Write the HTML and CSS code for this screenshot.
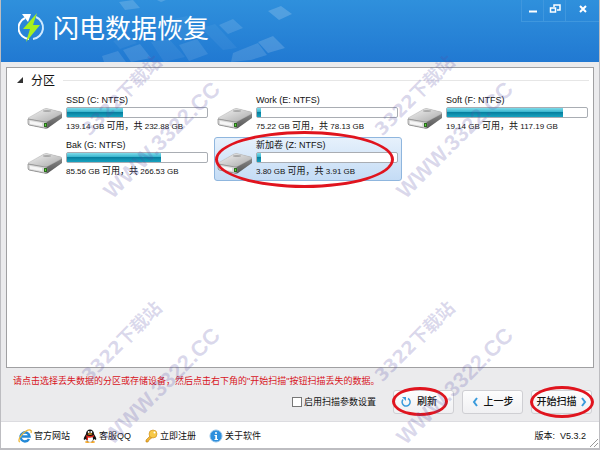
FILE: index.html
```html
<!DOCTYPE html>
<html lang="zh-CN">
  <head>
    <meta charset="UTF-8" />
    <title>闪电数据恢复</title>
    <link rel="stylesheet" href="styles.css">
  </head>
  <body>
    <div class="window">
      <header class="titlebar">
        <svg class="tiles" width="300" height="62" viewBox="0 0 300 62" aria-hidden="true">
          <g fill="#fff">
            <path d="M118 2 L132 0 L139 8 L124 10 Z" opacity=".16" />
            <path d="M156 0 L165 0 L160 2 Z" opacity=".16" />
            <path d="M267 11 L280 6 L291 14 L278 20 Z" opacity=".18" />
            <path d="M218 25 L232 19 L242 28 L227 34 Z" opacity=".13" />
            <path d="M200 28 L214 24 L236 48 L222 50 Z" opacity=".05" />
            <path d="M101 56 L117 51 L125 62 L103 62 Z" opacity=".12" />
            <path d="M122 50 L139 44 L150 58 L130 62 Z" opacity=".12" />
            <path d="M112 41 L128 36 L136 43 L119 49 Z" opacity=".05" />
            <path d="M150 42 L168 39 L184 57 L163 62 Z" opacity=".06" />
            <path d="M178 45 L196 39 L207 54 L188 61 Z" opacity=".1" />
            <path d="M168 20 L186 16 L200 35 L178 40 Z" opacity=".05" />
            <path d="M230 62 L232 53 L257 43 L266 55 L250 60 Z" opacity=".13" />
            <path d="M257 42 L272 36 L284 48 L267 53 Z" opacity=".16" />
          </g>
        </svg>
        <svg class="logo" width="28" height="32" viewBox="0 0 28 32" aria-hidden="true">
          <g fill="none" stroke="#fff" stroke-width="2">
            <path d="M11 27 A11 11 0 0 1 7 6" />
            <path d="M18 5 A11.500 11.500 0 0 1 15 27" stroke="#cfe9ff" />
          </g>
          <path d="M4 2 L13 2 L10 10 Z" fill="#fff" />
          <path d="M19 1 L5 17 L12 17 L8 30 L22 13 L15 13 Z" fill="#a6f01e" />
        </svg>
        <h1 class="brand">闪电数据恢复</h1>
        <div class="controls">
          <button class="control" aria-label="最小化">
            <svg width="10" height="10" viewBox="0 0 10 10"><path d="M1 7.500 H9" stroke="#fff" stroke-width="2" /></svg>
          </button>
          <button class="control" aria-label="还原">
            <svg width="12" height="10" viewBox="0 0 12 10" fill="none" stroke="#fff" stroke-width="1.500"><path d="M5 3 V1 H11 V6 H8" /><rect x="1.500" y="4" width="5" height="4" /></svg>
          </button>
          <button class="control control-close" aria-label="关闭">
            <svg width="10" height="10" viewBox="0 0 10 10"><path d="M2 2 L8 8 M8 2 L2 8" stroke="#fff" stroke-width="2" /></svg>
          </button>
        </div>
      </header>

      <svg class="defs" width="0" height="0" aria-hidden="true">
        <defs>
          <linearGradient id="disk-top" x1="0" y1="0" x2="1" y2="1">
            <stop offset="0" stop-color="#f4f4f4" />
            <stop offset="1" stop-color="#a9a9a9" />
          </linearGradient>
          <linearGradient id="disk-side" x1="0" y1="0" x2="0" y2="1">
            <stop offset="0" stop-color="#999" />
            <stop offset="1" stop-color="#555" />
          </linearGradient>
          <symbol id="disk" viewBox="0 0 36 22">
            <path d="M1 11 L17 1 Q19 0 22 1 L34 4 Q35 5 35 6 L35 10 L21 20 Q19 21 17 20 L2 17 Q1 16 1 15 Z" fill="url(#disk-side)" />
            <path d="M1 10 L17 1 Q19 0 22 1 L34 4 Q35 5 34 6 L21 13 Q19 14 17 14 L2 11 Z" fill="url(#disk-top)" stroke="#bbb" stroke-width=".5" />
            <path d="M1 11 L18 14 Q20 14 20 15 L20 19 Q19 20 17 20 L2 17 Q1 16 1 15 Z" fill="#d8d8d8" stroke="#888" stroke-width=".7" />
            <path d="M3 13 L15 15 V18 L3 16 Z" fill="#f6f6f6" />
            <path d="M17 15 L20 15 L20 19 L17 19 Z" fill="#2b6b1d" />
            <path d="M18 16 H19 V18 H18 Z" fill="#5bdc3c" />
            <ellipse cx="20" cy="3" rx="4" ry="1" fill="#aaa" />
          </symbol>
        </defs>
      </svg>

      <main class="panel">
        <h2 class="group">
          <svg width="6" height="6" viewBox="0 0 6 6" aria-hidden="true"><path d="M6 0 V6 H0 Z" fill="#333" /></svg>
          分区
        </h2>
        <div class="drives">
          <section class="drive">
            <svg class="disk" width="36" height="22"><use href="#disk" /></svg>
            <div class="info">
              <h3 class="name">SSD (C: NTFS)</h3>
              <div class="bar"><div class="used" style="width: 40%"></div></div>
              <p class="space">139.14 GB <span>可用，共</span> 232.88 GB</p>
            </div>
          </section>
          <section class="drive">
            <svg class="disk" width="36" height="22"><use href="#disk" /></svg>
            <div class="info">
              <h3 class="name">Work (E: NTFS)</h3>
              <div class="bar"><div class="used" style="width: 3%"></div></div>
              <p class="space">75.22 GB <span>可用，共</span> 78.13 GB</p>
            </div>
          </section>
          <section class="drive">
            <svg class="disk" width="36" height="22"><use href="#disk" /></svg>
            <div class="info">
              <h3 class="name">Soft (F: NTFS)</h3>
              <div class="bar"><div class="used" style="width: 83%"></div></div>
              <p class="space">19.14 GB <span>可用，共</span> 117.19 GB</p>
            </div>
          </section>
          <section class="drive">
            <svg class="disk" width="36" height="22"><use href="#disk" /></svg>
            <div class="info">
              <h3 class="name">Bak (G: NTFS)</h3>
              <div class="bar"><div class="used" style="width: 67%"></div></div>
              <p class="space">85.56 GB <span>可用，共</span> 266.53 GB</p>
            </div>
          </section>
          <section class="drive selected">
            <svg class="disk" width="36" height="22"><use href="#disk" /></svg>
            <div class="info">
              <h3 class="name">新加卷 (Z: NTFS)</h3>
              <div class="bar"><div class="used" style="width: 3%"></div></div>
              <p class="space">3.80 GB <span>可用，共</span> 3.91 GB</p>
            </div>
            <i class="ring ring-drive"></i>
          </section>
        </div>
      </main>

      <p class="hint">请点击选择丢失数据的分区或存储设备，然后点击右下角的"开始扫描"按钮扫描丢失的数据。</p>

      <div class="actions">
        <label class="option"><input type="checkbox" />启用扫描参数设置</label>
        <button class="action action-refresh">
          <svg width="10" height="10" viewBox="0 0 10 10" fill="none" aria-hidden="true"><path d="M8 2.500 A4 4 0 1 1 3 1.500" stroke="#3a9bdc" stroke-width="1.500" transform="matrix(-1 0 0 1 10 0)" /><path d="M1 0 H5 V4 Z" fill="#3a9bdc" /></svg>
          刷新
          <i class="ring ring-refresh"></i>
        </button>
        <button class="action">
          <svg width="6" height="10" viewBox="0 0 6 10" fill="none" aria-hidden="true"><path d="M5 1 L2 5 L5 9" stroke="#3a9bdc" stroke-width="2" /></svg>
          上一步
        </button>
        <button class="action action-scan">
          开始扫描
          <svg width="6" height="10" viewBox="0 0 6 10" fill="none" aria-hidden="true"><path d="M1 1 L4 5 L1 9" stroke="#3a9bdc" stroke-width="2" /></svg>
          <i class="ring ring-scan"></i>
        </button>
      </div>

      <footer class="footer">
        <a class="link" href="#">
          <svg width="14" height="14" viewBox="0 0 14 14" fill="none" aria-hidden="true">
            <path d="M11 10 A4.500 4.500 0 1 1 11.500 7.500 H4" stroke="#2389d7" stroke-width="2.500" />
            <path d="M2 13 C-1 12 3 5 8 2 C12 0 14 1 13 4" stroke="#f0b93a" stroke-width="1.300" />
          </svg>
          官方网站
        </a>
        <a class="link" href="#">
          <svg width="14" height="14" viewBox="0 0 14 14" aria-hidden="true">
            <ellipse cx="4.500" cy="13" rx="2.500" ry="1" fill="#f5a623" />
            <ellipse cx="9.500" cy="13" rx="2.500" ry="1" fill="#f5a623" />
            <path d="M3 5 C3 -1 11 -1 11 5 C12 7 14 9 13 11 L11 10 C10 14 4 14 3 10 L1 11 C0 9 2 7 3 5 Z" fill="#111" />
            <ellipse cx="7" cy="10" rx="3" ry="3" fill="#fff" />
            <circle cx="5.700" cy="3" r="1" fill="#fff" />
            <circle cx="8.300" cy="3" r="1" fill="#fff" />
            <ellipse cx="7" cy="5" rx="2.500" ry=".8" fill="#f5a623" />
            <path d="M3 6 Q7 8 11 6 V7.500 Q7 9.500 5 8.500 V11 H3.500 V8 Z" fill="#e0261c" />
          </svg>
          客服QQ
        </a>
        <a class="link" href="#">
          <svg width="14" height="14" viewBox="0 0 14 14" aria-hidden="true">
            <path d="M7 6 L2 11 V13 H4 L5 11 L9 8" fill="#f2b632" stroke="#b97b12" stroke-width=".6" />
            <circle cx="9" cy="5" r="4" fill="#f7c948" stroke="#c98a17" stroke-width=".6" />
            <circle cx="10.500" cy="3.500" r="1" fill="#fff" />
          </svg>
          立即注册
        </a>
        <a class="link" href="#">
          <svg width="14" height="14" viewBox="0 0 14 14" aria-hidden="true">
            <circle cx="7" cy="7" r="6" fill="#2d8fdd" stroke="#8cbfe8" />
            <circle cx="7" cy="4" r="1" fill="#fff" />
            <path d="M5.500 6 H8 V10 H9 V11 H5.500 V10 H6.300 V7 H5.500 Z" fill="#fff" />
          </svg>
          关于软件
        </a>
        <span class="version">版本: &nbsp;V5.3.2</span>
        <svg class="grip" width="8" height="8" viewBox="0 0 8 8" aria-hidden="true"><path d="M0 8 L8 0 M4 8 L8 4" stroke="#999" /></svg>
      </footer>

      <div class="mark mark-1"><span>3322下载站</span><b>WWW.3322.CC</b></div>
      <div class="mark mark-2"><span>3322下载站</span><b>WWW.3322.CC</b></div>
      <div class="mark mark-3"><span>3322下载站</span><b>WWW.3322.CC</b></div>
      <div class="mark mark-4"><span>3322下载站</span><b>WWW.3322.CC</b></div>
    </div>
  </body>
</html>
```
FILE: styles.css
```css
* {
  box-sizing: border-box;
}

body,
button {
  font: 9px/12px "Liberation Sans", "Noto Sans CJK SC", sans-serif;
  color: #111;
}

body,
h1,
h2,
h3,
p {
  margin: 0;
}

svg {
  flex: none;
}

.window {
  position: relative;
  display: flex;
  flex-direction: column;
  min-height: 100vh;
  overflow: hidden;
  background: #ebebed;
  border: 1px solid #bdbdc1;
  border-width: 0 1px 2px;
}

.titlebar {
  position: relative;
  display: flex;
  align-items: flex-start;
  height: 62px;
  padding-left: 17px;
  background: linear-gradient(#2f90dc, #2179d2);
}

.tiles {
  position: absolute;
  left: 0;
  top: 0;
}

.logo {
  margin-top: 12px;
}

.brand {
  flex: 1;
  margin-left: 7px;
  font: 400 26px/32px "Noto Sans CJK SC", sans-serif;
  margin-top: 11px;
  color: #fff;
  z-index: 1;
}

.controls {
  display: flex;
}

.control {
  width: 22px;
  height: 22px;
  padding: 0;
  background: transparent;
  border: 1px solid #3f97de;
  border-width: 0 0 1px 1px;
}

.control-close {
  width: 34px;
}

.defs {
  position: absolute;
}

.panel {
  flex: 1;
  margin: 5px 5px 0;
  padding: 5px 1px 0 17px;
  background: #fff;
  border: 1px solid #a0a0a2;
}

.group {
  display: flex;
  align-items: center;
  gap: 8px;
  margin-left: -7px;
  padding-right: 3px;
  font: 12px/14px "Noto Sans CJK SC", sans-serif;
}

.group::after {
  content: "";
  flex: 1;
  height: 1px;
  background: #e6e6e6;
}

.drives {
  display: grid;
  grid-template-columns: repeat(3, 1fr);
  gap: 1px 2px;
  margin-top: 5px;
}

.drive {
  position: relative;
  display: flex;
  height: 44px;
  padding: 1px 3px 0 2px;
  border: 1px solid transparent;
  border-radius: 3px;
}

.selected {
  background: linear-gradient(#e6f1fc, #c4dcf5);
  border-color: #8fb6de;
}

.disk {
  margin-top: 14px;
}

.info {
  flex: 1;
  margin-left: 3px;
}

.name {
  font-size: 9px;
  line-height: 12px;
  font-weight: normal;
}

.bar {
  height: 11px;
  margin-top: 1px;
  background: #fff;
  border: 1px solid #a9adb3;
  border-radius: 2px;
}

.used {
  height: 100%;
  background: linear-gradient(#7fdcea, #35b3cd 45%, #07809f 50%, #18a3c0);
}

.space {
  margin-top: 2px;
  font-size: 8px;
}

.space span {
  font-size: 9px;
}

.ring {
  position: absolute;
  border: 3px solid #e0141e;
  border-radius: 50%;
}

.ring-drive {
  inset: -7px 7px -8px 0;
}

.ring-refresh {
  inset: -4px 5px -3px -2px;
}

.ring-scan {
  inset: -5px -3px -5px -2px;
}

.hint {
  margin: 7px 12px 0;
  color: #d8141c;
}

.actions {
  display: flex;
  justify-content: flex-end;
  align-items: center;
  gap: 8px;
  padding: 3px 7px 7px;
}

.option {
  display: flex;
  align-items: center;
  gap: 2px;
  margin-right: 9px;
}

.option input {
  appearance: none;
  width: 10px;
  height: 10px;
  margin: 0;
  background: #fff;
  border: 1px solid #777;
}

.action {
  position: relative;
  display: flex;
  align-items: center;
  justify-content: center;
  gap: 6px;
  width: 61px;
  height: 24px;
  padding: 0;
  font-size: 10px;
  font-weight: 500;
  background: linear-gradient(#fdfdfd, #f0f0f2);
  border: 1px solid #cfcfd3;
  border-radius: 3px;
}

.action-refresh {
  justify-content: flex-start;
  padding-left: 7px;
}

.action-scan {
  gap: 4px;
}

.footer {
  position: relative;
  display: flex;
  align-items: center;
  gap: 13px;
  height: 27px;
  padding: 2px 13px 0 17px;
  background: #fff;
  border-top: 1px solid #dcdce0;
}

.link {
  display: flex;
  align-items: center;
  gap: 2px;
  color: inherit;
  text-decoration: none;
}

.version {
  margin-left: auto;
}

.grip {
  position: absolute;
  right: 1px;
  bottom: 1px;
}

/* diagonal site marks, laid over the whole window */
.mark {
  position: absolute;
  width: 160px;
  color: rgba(86, 78, 168, 0.22);
  font: bold 22px/26px "Liberation Sans", "Noto Sans CJK SC", sans-serif;
  white-space: nowrap;
  transform: rotate(-45deg);
  pointer-events: none;
}

.mark span {
  display: block;
  padding-left: 28px;
  font: bold 18px/26px "DejaVu Sans", "Noto Sans CJK SC", sans-serif;
}

.mark b {
  display: block;
  margin-top: 34px;
}

.mark-1,
.mark-3 {
  left: 62px;
}

.mark-2,
.mark-4 {
  left: 355px;
}

.mark-1,
.mark-2 {
  top: 74px;
}

.mark-3,
.mark-4 {
  top: 320px;
}
```
